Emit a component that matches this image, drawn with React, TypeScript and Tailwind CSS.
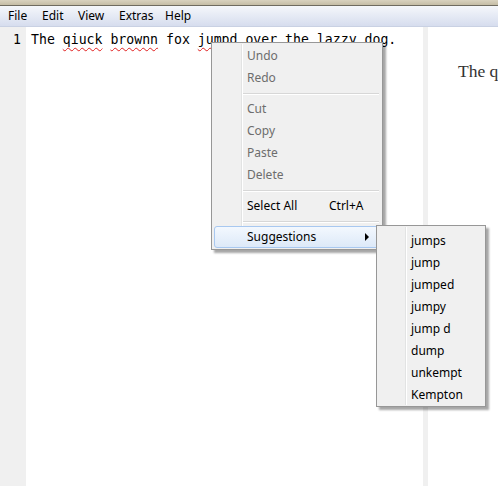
import React from 'react';

const menuFont = { fontFamily: '"Noto Sans", "Open Sans", sans-serif' };

const MenuItem: React.FC<{ label: string; disabled?: boolean; shortcut?: string; active?: boolean; arrow?: boolean }> = ({
  label,
  disabled,
  shortcut,
  active,
  arrow,
}) => (
  <div
    className={`relative h-[22px] mx-[2px] flex items-center rounded-[3px] border ${
      active ? 'border-[#a8c8f0] bg-gradient-to-b from-[#f3f8fe] to-[#dde9f8]' : 'border-transparent'
    }`}
  >
    <span className={`pl-[32px] text-[12px] ${disabled ? 'text-[#6d6d6d]' : 'text-black'}`}>{label}</span>
    {shortcut && <span className="absolute left-[114px] text-[12px] text-black">{shortcut}</span>}
    {arrow && (
      <svg className="absolute left-[150px]" width="5" height="8" viewBox="0 0 5 8">
        <path d="M0 0 L4 4 L0 8 Z" fill="#000" />
      </svg>
    )}
  </div>
);

const Sep: React.FC = () => (
  <div className="h-[9px] flex flex-col justify-center pl-[30px] pr-[3px]">
    <div className="h-px bg-[#d7d7d7]" />
    <div className="h-px bg-white" />
  </div>
);

const SubItem: React.FC<{ label: string }> = ({ label }) => (
  <div className="h-[22px] flex items-center pl-[34px] text-[12px] text-black">{label}</div>
);

export default function App() {
  const mono = { fontFamily: '"DejaVu Sans Mono", "Liberation Mono", monospace' };
  const typo = 'underline decoration-wavy decoration-[#e02020] decoration-[1px] underline-offset-[3px]';

  return (
    <div className="relative w-[498px] h-[486px] overflow-hidden bg-white flex flex-col">
      {/* window chrome remnant */}
      <div className="h-[5px] bg-gradient-to-b from-[#d9d2bf] to-[#c5bda6]" />
      <div className="h-px bg-[#6f6b60]" />

      {/* menu bar */}
      <div
        className="h-[21px] flex items-center pl-[8px] text-[12px] text-black bg-gradient-to-b from-[#f5f7fb] to-[#d6ddee] border-b border-[#c9d1e3]"
        style={menuFont}
      >
        <span className="w-[34px]">File</span>
        <span className="w-[36px]">Edit</span>
        <span className="w-[41px]">View</span>
        <span className="w-[46px]">Extras</span>
        <span>Help</span>
      </div>

      {/* editor + preview */}
      <div className="flex flex-1 min-h-0">
        <div className="w-[26px] shrink-0 bg-[#f0f0f0] pt-[4px] pr-[5px] text-right text-[13.2px] text-black leading-[17px]" style={mono}>
          1
        </div>
        <div className="w-[397px] shrink-0 pt-[4px] pl-[5px] text-[13.2px] text-black leading-[17px] whitespace-pre" style={mono}>
          The <span className={typo}>qiuck</span> <span className={typo}>brownn</span> fox{' '}
          <span className={typo}>jumpd</span> over the <span className={typo}>lazzy</span> dog.
        </div>
        <div className="w-[5px] shrink-0 bg-[#f0f0f0]" />
        <div
          className="flex-1 min-w-0 overflow-hidden pt-[31px] pl-[30px] whitespace-nowrap text-[17.5px] text-[#333]"
          style={{ fontFamily: '"Liberation Serif", "DejaVu Serif", serif' }}
        >
          The qiuck brownn fox
        </div>
      </div>

      {/* context menu */}
      <div
        className="absolute left-[211px] top-[42px] w-[172px] bg-[#f0f0f0] border border-[#979797] pt-[2px] pb-px shadow-[3px_3px_2px_rgba(0,0,0,0.35)]"
        style={menuFont}
      >
        <div className="absolute left-[29px] top-[1px] bottom-[1px] w-px bg-[#e2e3e3]" />
        <div className="absolute left-[30px] top-[1px] bottom-[1px] w-px bg-white" />
        <MenuItem label="Undo" disabled />
        <MenuItem label="Redo" disabled />
        <Sep />
        <MenuItem label="Cut" disabled />
        <MenuItem label="Copy" disabled />
        <MenuItem label="Paste" disabled />
        <MenuItem label="Delete" disabled />
        <Sep />
        <MenuItem label="Select All" shortcut="Ctrl+A" />
        <Sep />
        <MenuItem label="Suggestions" active arrow />
      </div>

      {/* suggestions submenu */}
      <div
        className="absolute left-[376px] top-[225px] w-[110px] bg-[#f0f0f0] border border-[#979797] pt-[4px] shadow-[3px_3px_2px_rgba(0,0,0,0.35)]"
        style={menuFont}
      >
        <div className="absolute left-[28px] top-[1px] bottom-[1px] w-px bg-[#e2e3e3]" />
        <div className="absolute left-[29px] top-[1px] bottom-[1px] w-px bg-white" />
        {['jumps', 'jump', 'jumped', 'jumpy', 'jump d', 'dump', 'unkempt', 'Kempton'].map(s => (
          <SubItem key={s} label={s} />
        ))}
      </div>
    </div>
  );
}
